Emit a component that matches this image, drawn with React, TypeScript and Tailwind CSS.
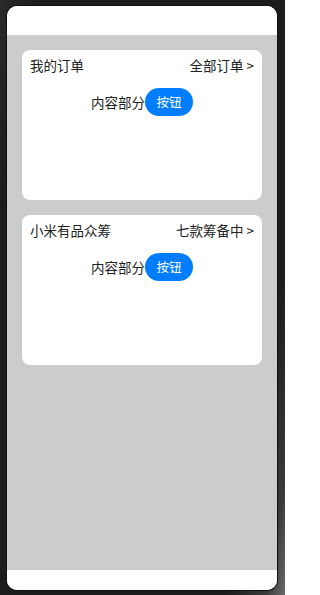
import React from 'react';

const cards = [
  { title: '我的订单', more: '全部订单 >' },
  { title: '小米有品众筹', more: '七款筹备中 >' },
];

function Card({ title, more }: { title: string; more: string }) {
  return (
    <div className="h-[150px] w-[240px] rounded-[8px] bg-white px-[8px] pt-[5px]">
      <div className="flex h-[20px] items-center justify-between text-[13.5px] leading-[20px] text-[#222]">
        <span>{title}</span>
        <span>{more}</span>
      </div>
      <div className="mt-[13px] flex items-center justify-center">
        <span className="text-[13.5px] text-[#222]">内容部分</span>
        <button className="h-[28px] w-[48px] rounded-full bg-[#007dff] text-[12.5px] text-white">
          按钮
        </button>
      </div>
    </div>
  );
}

export default function App() {
  return (
    <div
      className="h-[595px] w-[285px] overflow-hidden bg-[linear-gradient(100deg,#2a2a2a_0%,#1c1c1c_10%,#1c1c1c_85%,#3a3a3a_95%,#6a6a6a_100%)] pl-[7px] pt-[6px]"
      style={{ fontFamily: '"Noto Sans CJK SC", "Noto Sans", sans-serif' }}
    >
      <div className="flex h-[584px] w-[270px] flex-col overflow-hidden rounded-[10px] bg-white ring-1 ring-[#111]">
        <div className="h-[29px] shrink-0 bg-white" />
        <div className="flex flex-1 flex-col gap-[15px] bg-[#cccccc] px-[15px] pt-[15px]">
          {cards.map((c) => (
            <Card key={c.title} title={c.title} more={c.more} />
          ))}
        </div>
        <div className="h-[20px] shrink-0 bg-white" />
      </div>
    </div>
  );
}
